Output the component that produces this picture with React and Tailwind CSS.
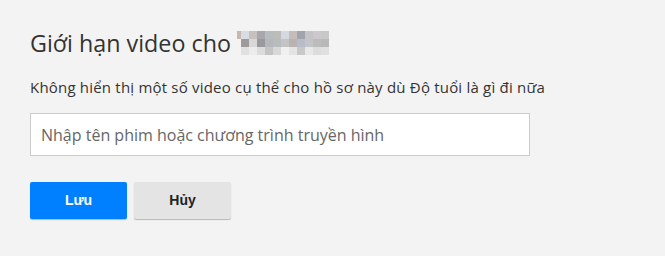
import React from "react";

const mosaic = [
  ["#d8dce4", "#c8c0bc", "#a8a8ac", "#b8bcc0", "#bcbcb8", "#d4d8e0", "#c8bcb8", "#a0a4ac", "#c4c4c8", "#ccc8cc", "#c8c8c8"],
  ["#9e9a9a", "#d8d8d8", "#9a9a9e", "#b4b8bc", "#b8bcbc", "#c4c4c4", "#b8b4b4", "#b8bcc8", "#c4c4c8", "#bcbcbc", "#b8b8b8"],
  ["#e0e0e0", "#ececec", "#dcdcdc", "#c4c4c4", "#d8d8d8", "#f0f0f0", "#e4e4e4", "#c8c8c8", "#e8e8e8", "#dcdcdc", "#e0e0e0"],
];

function BlurredName() {
  return (
    <div className="ml-[6px] flex items-start">
      <div className="h-[8px] w-[4px] bg-[#c8b8b0]" />
      <div className="flex flex-col">
        {mosaic.map((row, i) => (
          <div className="flex" key={i}>
            {row.map((c, j) => (
              <div key={j} className="h-[8px] w-[8px]" style={{ backgroundColor: c }} />
            ))}
          </div>
        ))}
      </div>
    </div>
  );
}

export default function App() {
  return (
    <div className="h-[256px] w-[665px] bg-[#f3f3f3] px-[30px] pt-[28px] font-['Open_Sans',sans-serif]">
      <div className="flex items-center">
        <h1 className="text-[23.3px] leading-[30px] text-[#333]">Giới hạn video cho</h1>
        <BlurredName />
      </div>
      <p className="mt-[19px] text-[15px] leading-[20px] tracking-[0.2px] text-[#333]">
        Không hiển thị một số video cụ thể cho hồ sơ này dù Độ tuổi là gì đi nữa
      </p>
      <div className="mt-[16px] flex h-[43px] w-[500px] items-center border border-[#ccc] bg-white px-[10px]">
        <span className="text-[16px] text-[#666]">Nhập tên phim hoặc chương trình truyền hình</span>
      </div>
      <div className="mt-[26px] flex gap-[7px] font-['Liberation_Sans',Arial,sans-serif]">
        <button className="h-[37px] w-[97px] rounded-[2px] bg-[#0080ff] text-[14px] font-bold text-white shadow-[0_1px_1px_rgba(0,0,0,0.25)]">
          Lưu
        </button>
        <button className="h-[37px] w-[97px] rounded-[2px] bg-[#e4e4e4] text-[14px] font-bold text-[#222] shadow-[0_1px_1px_rgba(0,0,0,0.25)]">
          Hủy
        </button>
      </div>
    </div>
  );
}
